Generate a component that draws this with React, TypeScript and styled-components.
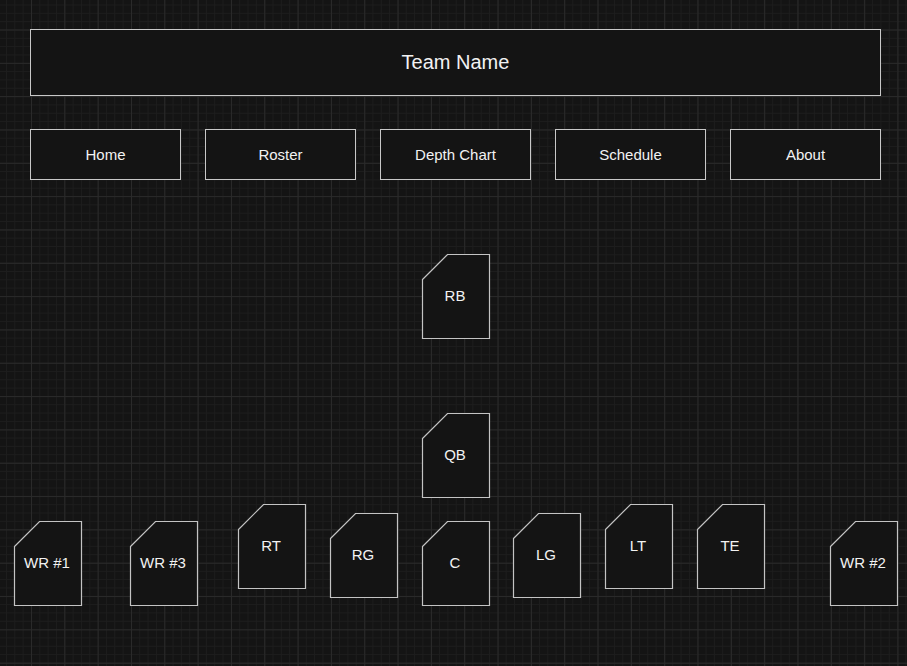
import React from "react";
import styled, { createGlobalStyle } from "styled-components";

const GlobalStyle = createGlobalStyle`
  html, body {
    margin: 0;
    padding: 0;
  }
  body {
    width: 907px;
    height: 666px;
    overflow: hidden;
    background-color: #141414;
    background-image:
      linear-gradient(to right, #2a2a2a 1px, transparent 1px),
      linear-gradient(to bottom, #2a2a2a 1px, transparent 1px),
      linear-gradient(to right, #1d1d1d 1px, transparent 1px),
      linear-gradient(to bottom, #1d1d1d 1px, transparent 1px);
    background-size: 33.333px 33.333px, 33.333px 33.333px, 8.333px 8.333px, 8.333px 8.333px;
    background-position: 31px 29.5px, 31px 29.5px, 31px 29.5px, 31px 29.5px;
    font-family: "Liberation Sans", Arial, Helvetica, sans-serif;
    color: #f2f2f2;
  }
`;

const Page = styled.div`
  width: 907px;
  height: 666px;
  display: flex;
  flex-direction: column;
`;

const Top = styled.div`
  padding: 29px 26px 0 30px;
  display: flex;
  flex-direction: column;
  gap: 33px;
`;

const Header = styled.header`
  box-sizing: border-box;
  width: 851px;
  height: 67px;
  border: 1px solid #c8c8c8;
  background: #141414;
  display: flex;
  align-items: center;
  justify-content: center;
  font-size: 20px;
  padding-bottom: 1px;
`;

const Nav = styled.nav`
  width: 851px;
  height: 51px;
  display: flex;
  justify-content: space-between;
`;

const NavItem = styled.div`
  box-sizing: border-box;
  width: 151px;
  height: 51px;
  border: 1px solid #c8c8c8;
  background: #141414;
  display: flex;
  align-items: center;
  justify-content: center;
  font-size: 15px;
`;

const Field = styled.div`
  position: relative;
  flex: 1;
`;

const NodeBox = styled.div`
  position: absolute;
  width: 68px;
  height: 85px;
  display: flex;
  align-items: center;
  justify-content: center;
`;

const NodeShape = styled.svg`
  position: absolute;
  inset: 0;
  overflow: visible;
`;

const NodeLabel = styled.span`
  position: relative;
  font-size: 15px;
  line-height: 1;
  transform: translate(-1px, -1.5px);
`;

type Player = { label: string; x: number; y: number };

const players: Player[] = [
  { label: "RB", x: 422, y: 74 },
  { label: "QB", x: 422, y: 233 },
  { label: "WR #1", x: 14, y: 341 },
  { label: "WR #3", x: 130, y: 341 },
  { label: "RT", x: 238, y: 324 },
  { label: "RG", x: 330, y: 333 },
  { label: "C", x: 422, y: 341 },
  { label: "LG", x: 513, y: 333 },
  { label: "LT", x: 605, y: 324 },
  { label: "TE", x: 697, y: 324 },
  { label: "WR #2", x: 830, y: 341 },
];

const Node: React.FC<{ p: Player }> = ({ p }) => (
  <NodeBox style={{ left: p.x, top: p.y }}>
    <NodeShape width="68" height="85" viewBox="0 0 68 85">
      <polygon
        points="0.5,25.5 25.5,0.5 67.5,0.5 67.5,84.5 0.5,84.5"
        fill="#141414"
        stroke="#c4c4c4"
        strokeWidth="1.2"
      />
    </NodeShape>
    <NodeLabel>{p.label}</NodeLabel>
  </NodeBox>
);

const navItems = ["Home", "Roster", "Depth Chart", "Schedule", "About"];

export default function App() {
  return (
    <>
      <GlobalStyle />
      <Page>
        <Top>
          <Header>Team Name</Header>
          <Nav>
            {navItems.map((n) => (
              <NavItem key={n}>{n}</NavItem>
            ))}
          </Nav>
        </Top>
        <Field>
          {players.map((p) => (
            <Node key={p.label} p={p} />
          ))}
        </Field>
      </Page>
    </>
  );
}
